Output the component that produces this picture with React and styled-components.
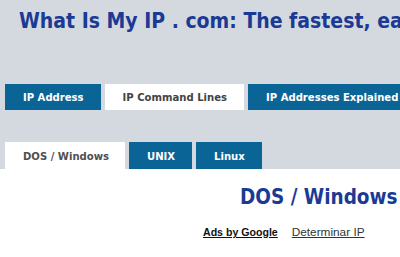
import React from "react"
import styled, { createGlobalStyle } from "styled-components"

const GlobalStyle = createGlobalStyle`
   html, body {
      margin: 0;
      padding: 0;
      overflow: hidden;
      background: #d4d8df;
   }
   body {
      font-family: "DejaVu Sans Condensed", "DejaVu Sans", Verdana, sans-serif;
   }
`

const mainTabs = [
   { label: "IP Address" },
   { label: "IP Command Lines", active: true },
   { label: "IP Addresses Explained" },
]

const osTabs = [
   { label: "DOS / Windows", active: true },
   { label: "UNIX" },
   { label: "Linux" },
]

export default function App() {
   return (
      <Page>
         <GlobalStyle />
         <Title>What Is My IP . com: The fastest, easiest way to find your IP address</Title>

         <MainNav>
            {mainTabs.map(t => (
               <Tab key={t.label} $active={t.active}>{t.label}</Tab>
            ))}
         </MainNav>

         <SubNav>
            {osTabs.map(t => (
               <SubTab key={t.label} $active={t.active}>{t.label}</SubTab>
            ))}
         </SubNav>

         <Content>
            <Heading>DOS / Windows</Heading>
            <Ads>
               <a href="#" className="by">Ads by Google</a>
               <a href="#">Determinar IP</a>
            </Ads>
         </Content>
      </Page>
   )
}

const Page = styled.div`
   width: 800px;
   min-height: 257px;
`

const Title = styled.h1`
   margin: 0;
   padding: 8px 0 0 19px;
   font-size: 21px;
   line-height: 26px;
   font-weight: bold;
   color: #1a3a94;
   white-space: nowrap;
`

const MainNav = styled.ul`
   display: flex;
   gap: 4px;
   list-style: none;
   margin: 50px 0 0;
   padding: 0 0 0 5px;
`

const Tab = styled.li`
   height: 26px;
   line-height: 27px;
   padding: 0 17px 0 18px;
   font-size: 11.2px;
   font-weight: bold;
   white-space: nowrap;
   background: ${p => (p.$active ? "#ffffff" : "#0a6596")};
   color: ${p => (p.$active ? "#444444" : "#ffffff")};
`

const SubNav = styled(MainNav)`
   margin-top: 32px;
`

const SubTab = styled(Tab)`
   height: 27px;
   line-height: 29px;
   background: ${p => (p.$active ? "#ffffff" : "#0a6596")};
   color: ${p => (p.$active ? "#505050" : "#ffffff")};
   ${p => p.$active && "padding-right: 16px;"}
`

const Content = styled.div`
   background: #ffffff;
   min-height: 100px;
   width: 100%;
   padding-top: 15px;
`

const Heading = styled.h2`
   margin: 0 0 0 240px;
   font-size: 20.5px;
   line-height: 26px;
   font-weight: bold;
   color: #1a3a94;
`

const Ads = styled.div`
   display: flex;
   align-items: baseline;
   gap: 14px;
   margin: 15px 0 0 203px;
   font-family: "Liberation Sans", Arial, sans-serif;
   font-size: 11.8px;

   a {
      color: #333333;
      text-decoration: underline;
   }
   .by {
      font-size: 10.6px;
      font-weight: bold;
      color: #111111;
   }
`
